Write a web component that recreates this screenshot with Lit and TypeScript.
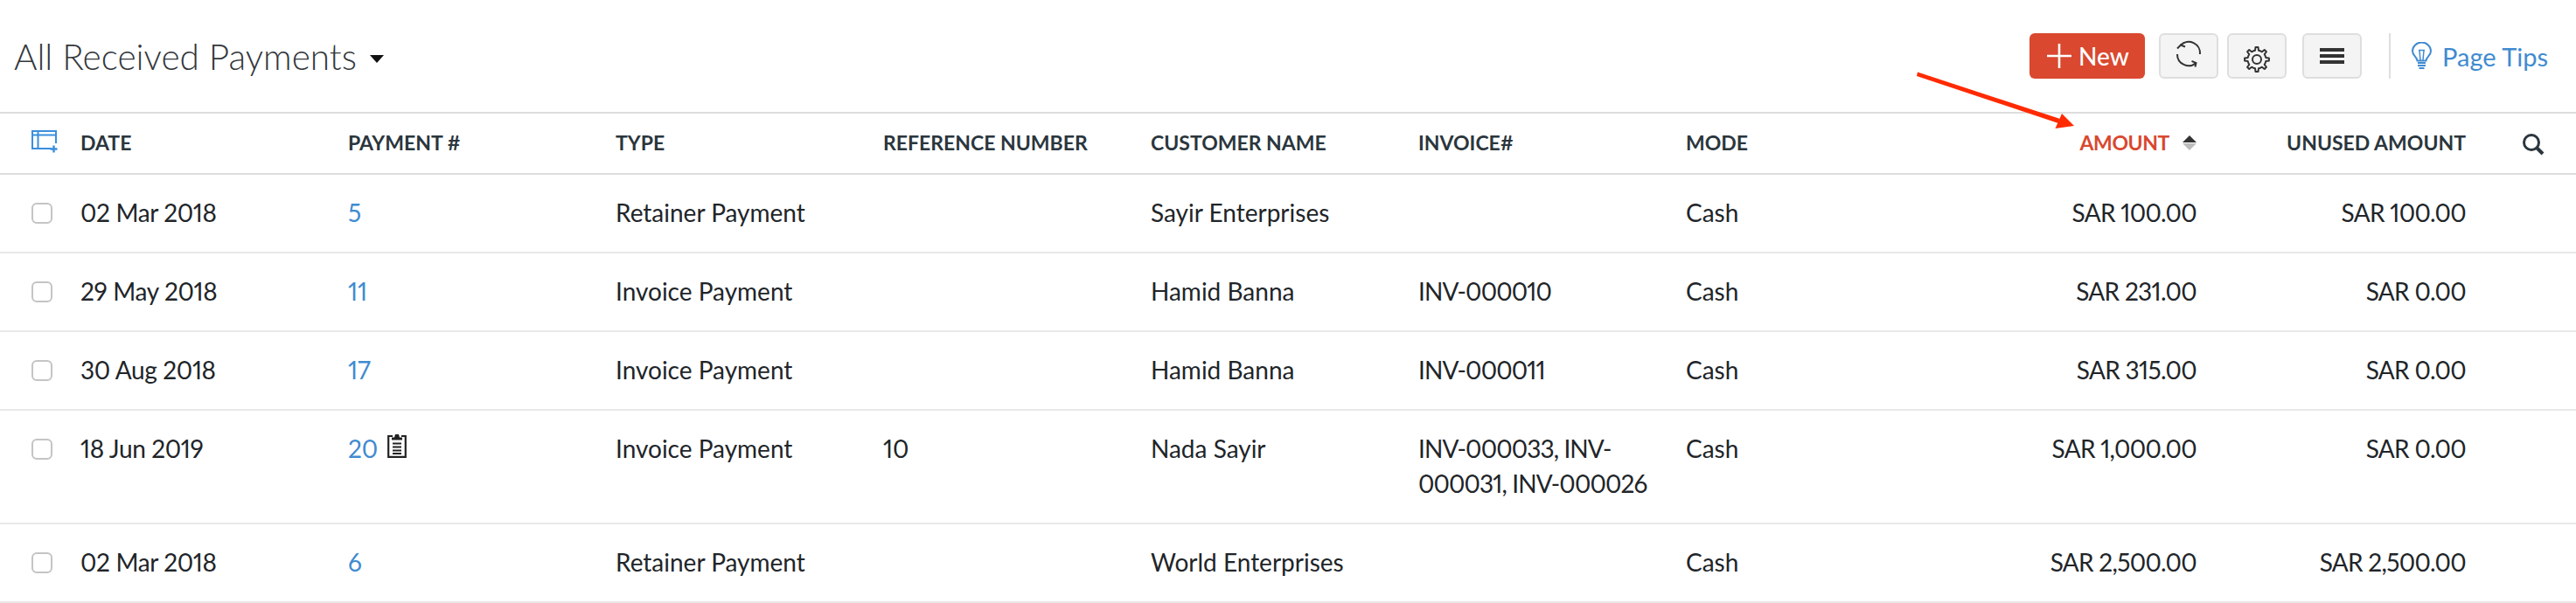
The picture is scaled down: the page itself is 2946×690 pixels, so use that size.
import { LitElement, html, css } from "lit";
import { customElement } from "lit/decorators.js";

interface Row {
  date: string;
  no: string;
  note?: boolean;
  type: string;
  ref: string;
  customer: string;
  invoice: string[];
  mode: string;
  amount: string;
  unused: string;
}

const ROWS: Row[] = [
  { date: "02 Mar 2018", no: "5", type: "Retainer Payment", ref: "", customer: "Sayir Enterprises", invoice: [], mode: "Cash", amount: "SAR 100.00", unused: "SAR 100.00" },
  { date: "29 May 2018", no: "11", type: "Invoice Payment", ref: "", customer: "Hamid Banna", invoice: ["INV-000010"], mode: "Cash", amount: "SAR 231.00", unused: "SAR 0.00" },
  { date: "30 Aug 2018", no: "17", type: "Invoice Payment", ref: "", customer: "Hamid Banna", invoice: ["INV-000011"], mode: "Cash", amount: "SAR 315.00", unused: "SAR 0.00" },
  { date: "18 Jun 2019", no: "20", note: true, type: "Invoice Payment", ref: "10", customer: "Nada Sayir", invoice: ["INV-000033, INV-", "000031, INV-000026"], mode: "Cash", amount: "SAR 1,000.00", unused: "SAR 0.00" },
  { date: "02 Mar 2018", no: "6", type: "Retainer Payment", ref: "", customer: "World Enterprises", invoice: [], mode: "Cash", amount: "SAR 2,500.00", unused: "SAR 2,500.00" },
];

function gearPath(cx: number, cy: number, ro: number, ri: number, teeth: number): string {
  const pts: string[] = [];
  const step = (Math.PI * 2) / teeth;
  for (let i = 0; i < teeth; i++) {
    const a = i * step - Math.PI / 2;
    const seq: [number, number][] = [
      [a - step * 0.5, ri],
      [a - step * 0.24, ri],
      [a - step * 0.14, ro],
      [a + step * 0.14, ro],
      [a + step * 0.24, ri],
    ];
    for (const [ang, r] of seq) {
      pts.push(`${(cx + Math.cos(ang) * r).toFixed(2)} ${(cy + Math.sin(ang) * r).toFixed(2)}`);
    }
  }
  return "M" + pts.join("L") + "Z";
}

@customElement("app-root")
export class AppRoot extends LitElement {
  static styles = css`
    :host {
      display: block;
      width: 2946px;
      height: 690px;
      position: relative;
      overflow: hidden;
      background: #fff;
      font-family: "Lato", "Liberation Sans", sans-serif;
      font-variant-numeric: proportional-nums;
      color: #212529;
    }
    .toolbar {
      height: 128px;
      border-bottom: 2px solid #ddd;
      display: flex;
      align-items: center;
      padding: 0 32px 0 16px;
    }
    .title {
      font-size: 40.5px;
      font-weight: 300;
      color: #33373b;
    }
    .caret {
      width: 0;
      height: 0;
      border-left: 8px solid transparent;
      border-right: 8px solid transparent;
      border-top: 9px solid #111;
      margin: 6px 0 0 15px;
    }
    .spacer { flex: 1; }
    .new {
      width: 132px;
      height: 52px;
      box-sizing: border-box;
      background: #d9482f;
      border-radius: 6px;
      color: #fff;
      display: flex;
      align-items: center;
      padding-left: 20px;
      gap: 8px;
      font-size: 28px;
      font-weight: 500;
    }
    .ibtn {
      width: 68px;
      height: 52px;
      box-sizing: border-box;
      background: #f4f4f4;
      border: 2px solid #dedede;
      border-radius: 6px;
      display: flex;
      align-items: center;
      justify-content: center;
      margin-left: 16px;
    }
    .ibtn.near { margin-left: 10px; }
    .ibtn.far { margin-left: 18px; }
    .sep {
      width: 2px;
      height: 52px;
      background: #dedede;
      margin: 0 24px 0 31px;
    }
    .tips {
      display: flex;
      align-items: center;
      gap: 12px;
      color: #408bd0;
      font-size: 29px;
    }
    table {
      width: 2946px;
      table-layout: fixed;
      border-collapse: separate;
      border-spacing: 0;
      font-size: 28px;
    }
    th {
      height: 68px;
      padding: 0 0 2px;
      box-sizing: border-box;
      border-bottom: 2px solid #ddd;
      text-align: left;
      font-size: 23px;
      font-weight: 700;
      color: #2b363d;
      white-space: nowrap;
      vertical-align: middle;
    }
    thead tr { height: 70px; }
    td {
      padding: 23px 0 25px;
      border-bottom: 2px solid #e8e8e8;
      line-height: 40px;
      vertical-align: top;
      color: #212529;
    }
    .c0 { width: 92px; padding-left: 36px; box-sizing: border-box; }
    .cw { width: 306px; }
    .cm { width: 200px; }
    .ca { width: 384px; text-align: right; }
    .cu { width: 308px; text-align: right; }
    .cs { width: auto; }
    th.ca { color: #d9482f; letter-spacing: -0.4px; }
    td.ca, td.cu { letter-spacing: -0.7px; }
    .date { letter-spacing: -0.35px; }
    .inv { letter-spacing: -0.9px; }
    .head-inner { display: flex; align-items: center; justify-content: flex-end; }
    .sort { margin-left: 15px; display: block; }
    .check {
      display: block;
      width: 24px;
      height: 24px;
      box-sizing: border-box;
      border: 2px solid #c4c4c4;
      border-radius: 6px;
      background: #fff;
      margin-top: 9px;
    }
    .link { color: #408bd0; }
    .no { display: flex; align-items: flex-start; gap: 11px; }
    .no svg { margin-top: 3px; }
    .arrow { position: absolute; left: 0; top: 0; pointer-events: none; }
    .search { margin: 4px 0 0 64px; }
    .i-refresh { margin-top: -4px; }
    .i-gear { margin-top: 8px; }
    .i-table { margin-top: -2px; }
    svg { display: block; }
  `;

  private refreshIcon() {
    return html`<svg class="i-refresh" width="34" height="34" viewBox="0 0 34 34" fill="none" stroke="#333" stroke-width="2">
      <path d="M8 6.5A13 13 0 0 1 30 17"></path>
      <path d="M4 17A13 13 0 0 0 25.5 27"></path>
      <path d="M4 10.5L8 6.5L13 8.5"></path>
      <path d="M20.5 24.8L25.5 27L24.5 31.5"></path>
    </svg>`;
  }

  private gearIcon() {
    return html`<svg class="i-gear" width="30" height="30" viewBox="0 0 30 30" fill="none" stroke="#333" stroke-width="2" stroke-linejoin="round">
      <path d=${gearPath(15, 15, 14, 10.5, 8)}></path>
      <circle cx="15" cy="15" r="5"></circle>
    </svg>`;
  }

  private menuIcon() {
    return html`<svg width="28" height="18" viewBox="0 0 28 18" fill="#333">
      <rect y="0" width="28" height="4"></rect>
      <rect y="7" width="28" height="4"></rect>
      <rect y="14" width="28" height="4"></rect>
    </svg>`;
  }

  private bulbIcon() {
    return html`<svg width="23" height="33" viewBox="0 0 23 33" fill="none" stroke="#408bd0" stroke-width="2">
      <path d="M6.5 21.5C6 17 1 15.5 1 10.5A10.5 10 0 0 1 22 10.5C22 15.5 17 17 16.5 21.5Z"></path>
      <path d="M8 9.5H15M9 9.5L10 21M14 9.5L13 21" stroke-width="1.5"></path>
      <path d="M7 24H16M7 27H16M8.5 30H14.5"></path>
    </svg>`;
  }

  private tableIcon() {
    return html`<svg class="i-table" width="30" height="26" viewBox="0 0 30 26" fill="none" stroke="#3a8fdc" stroke-width="2">
      <path d="M23 21H1V1H28V15"></path>
      <path d="M1 5.5H28M7.5 1V21"></path>
      <path d="M25.5 17.5V25.5M21.5 21.5H29.5" stroke-width="2.4"></path>
    </svg>`;
  }

  private noteIcon() {
    return html`<svg width="22" height="28" viewBox="0 0 22 28" fill="none">
      <path d="M6 3H1.2V26.8H20.8V3H16" stroke="#222" stroke-width="2.2"></path>
      <path d="M5 7.5H17V4.5H14L13 1H9L8 4.5H5Z" fill="#222"></path>
      <path d="M6 11.5H16M6 15.5H16M6 19.5H16M6 23H16" stroke="#222" stroke-width="2"></path>
    </svg>`;
  }

  render() {
    return html`
      <div class="toolbar">
        <span class="title">All Received Payments</span>
        <span class="caret"></span>
        <span class="spacer"></span>
        <div class="new">
          <svg width="28" height="28" viewBox="0 0 28 28" stroke="#fff" stroke-width="2.6">
            <path d="M14 0V28M0 14H28"></path>
          </svg>
          <span>New</span>
        </div>
        <div class="ibtn">${this.refreshIcon()}</div>
        <div class="ibtn near">${this.gearIcon()}</div>
        <div class="ibtn far">${this.menuIcon()}</div>
        <div class="sep"></div>
        <div class="tips">${this.bulbIcon()}<span>Page Tips</span></div>
      </div>
      <table>
        <thead>
          <tr>
            <th class="c0">${this.tableIcon()}</th>
            <th class="cw">DATE</th>
            <th class="cw">PAYMENT #</th>
            <th class="cw">TYPE</th>
            <th class="cw">REFERENCE NUMBER</th>
            <th class="cw">CUSTOMER NAME</th>
            <th class="cw">INVOICE#</th>
            <th class="cm">MODE</th>
            <th class="ca">
              <div class="head-inner">
                <span>AMOUNT</span>
                <svg class="sort" width="16" height="17" viewBox="0 0 16 17">
                  <path d="M8 0L16 8H0Z" fill="#333"></path>
                  <path d="M0 9H16L8 17Z" fill="#bdbdbd"></path>
                </svg>
              </div>
            </th>
            <th class="cu">UNUSED AMOUNT</th>
            <th class="cs">
              <svg class="search" width="26" height="26" viewBox="0 0 26 26" fill="none" stroke="#2b363d">
                <circle cx="11" cy="11" r="8.5" stroke-width="3"></circle>
                <path d="M17 17L24 24" stroke-width="4"></path>
              </svg>
            </th>
          </tr>
        </thead>
        <tbody>
          ${ROWS.map(
            (r) => html`
              <tr>
                <td class="c0"><span class="check"></span></td>
                <td class="date">${r.date}</td>
                <td>
                  <div class="no"><span class="link">${r.no}</span>${r.note ? this.noteIcon() : ""}</div>
                </td>
                <td>${r.type}</td>
                <td>${r.ref}</td>
                <td>${r.customer}</td>
                <td class="inv">${r.invoice.map((l, i) => html`${i ? html`<br />` : ""}${l}`)}</td>
                <td>${r.mode}</td>
                <td class="ca">${r.amount}</td>
                <td class="cu">${r.unused}</td>
                <td></td>
              </tr>
            `
          )}
        </tbody>
      </table>
      <svg class="arrow" width="2946" height="690" viewBox="0 0 2946 690">
        <path d="M2193 82.5L2356 136L2354 141L2192 87Z" fill="#ff2a00"></path>
        <path d="M2372 144L2350.5 147L2358 130Z" fill="#ff2a00"></path>
      </svg>
    `;
  }
}
